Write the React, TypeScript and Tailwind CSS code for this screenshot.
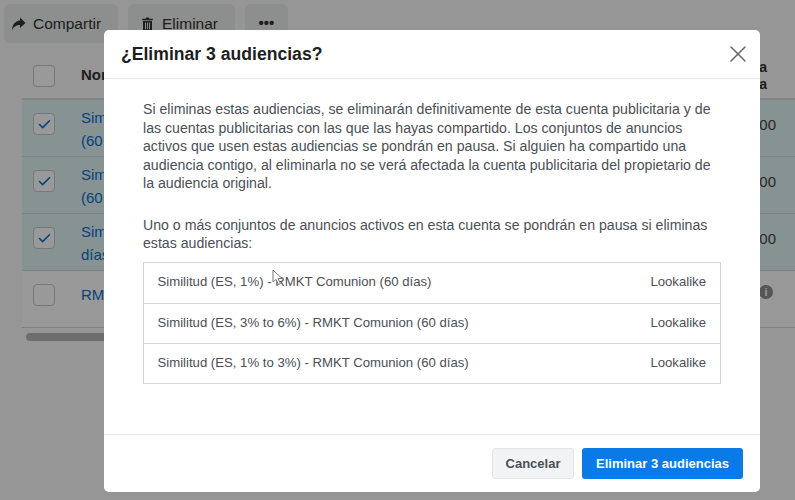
import { X, Check } from "lucide-react";

const rows = [
  { top: "Sim", bottom: "(60", checked: true },
  { top: "Sim", bottom: "(60", checked: true },
  { top: "Sim", bottom: "días", checked: true },
  { top: "RM", bottom: "", checked: false },
];

const audiences = [
  "Similitud (ES, 1%) - RMKT Comunion (60 días)",
  "Similitud (ES, 3% to 6%) - RMKT Comunion (60 días)",
  "Similitud (ES, 1% to 3%) - RMKT Comunion (60 días)",
];

function Box({ checked }: { checked: boolean }) {
  return (
    <div className="w-[22px] h-[22px] shrink-0 rounded-[4px] border border-[#c4c6c8] bg-white flex items-center justify-center">
      {checked && <Check className="w-[15px] h-[15px] text-[#0a6fd0]" strokeWidth={2.5} />}
    </div>
  );
}

export default function App() {
  return (
    <div className="relative w-[795px] h-[500px] overflow-hidden bg-[#fafafa] font-['Liberation_Sans',Arial,sans-serif]">
      {/* page behind the dialog */}
      <div className="flex gap-[10px] pl-[4px] pt-[4px]">
        <div className="w-[114px] h-[39px] rounded-[6px] bg-[#eceded] flex items-center pl-[7px] gap-[7px] text-[15.5px] text-[#333]">
          <svg width="15" height="14" viewBox="0 0 15 14">
            <path d="M9 0.5 L14.5 6 L9 11 L9 8 C5.5 8 2.8 9.5 1 13 C1.3 8 4 4 9 3.5 Z" fill="#333" />
          </svg>
          <span className="mt-[1px]">Compartir</span>
        </div>
        <div className="w-[107px] h-[39px] rounded-[6px] bg-[#eceded] flex items-center pl-[14px] gap-[9px] text-[15.5px] text-[#333]">
          <svg width="11" height="14" viewBox="0 0 11 14">
            <path d="M4 0.5 H7 V1.7 H10.8 V3.2 H0.2 V1.7 H4 Z" fill="#333" />
            <path
              d="M1 4 H10 V13 Q10 13.8 9.2 13.8 H1.8 Q1 13.8 1 13 Z M3 5.5 V12.3 H4 V5.5 Z M5 5.5 V12.3 H6 V5.5 Z M7 5.5 V12.3 H8 V5.5 Z"
              fill="#333"
              fillRule="evenodd"
            />
          </svg>
          <span className="mt-[1px]">Eliminar</span>
        </div>
        <div className="w-[43px] h-[39px] rounded-[6px] bg-[#eceded] flex items-center justify-center text-[15px] font-bold text-[#333]">
          •••
        </div>
      </div>
      <div className="ml-[22px] mt-[10px]">
        <div className="h-[47px] flex items-center pl-[11px] gap-[26px] border-b-2 border-[#dcdcdc]">
          <Box checked={false} />
          <span className="text-[15px] font-bold text-[#333]">Nombre</span>
          <div className="ml-auto mr-[28px] text-[14px] font-bold leading-[17px] text-[#333]">
            a<br />a
          </div>
        </div>
        {rows.map((row, i) => (
          <div
            key={i}
            className={`h-[57px] flex items-start pl-[11px] gap-[26px] border-b border-[#d8d8d8] ${row.checked ? "bg-[#e2f3f5]" : "bg-white"}`}
          >
            <div className="pt-[13px]">
              <Box checked={row.checked} />
            </div>
            <div className={`text-[15px] leading-[22.5px] text-[#0a6fd0] ${row.bottom ? "pt-[7px]" : "pt-[13px]"}`}>
              {row.top}
              {row.bottom && <br />}
              {row.bottom}
            </div>
            <div className="ml-auto mr-[19px] pt-[14px] text-[15px] text-[#444]">
              {row.checked ? (
                "00"
              ) : (
                <div className="w-[14px] h-[14px] mr-[3px] rounded-full bg-[#909090] flex items-center justify-center text-[11px] font-bold text-white">
                  i
                </div>
              )}
            </div>
          </div>
        ))}
        <div className="mt-[5px] ml-[4px] w-[400px] h-[8px] rounded-full bg-[#b8b8b8]" />
      </div>

      {/* overlay */}
      <div className="absolute inset-0 bg-black/40" />

      {/* dialog */}
      <div className="absolute left-[104px] top-[30px] w-[656px] h-[462px] bg-white rounded-[5px] flex flex-col">
        <div className="h-[49px] shrink-0 border-b border-[#e6e6e6] flex items-center justify-between pl-[17px] pr-[8px]">
          <h2 className="text-[17.6px] font-bold text-[#1c1e21]">¿Eliminar 3 audiencias?</h2>
          <X className="w-[28px] h-[28px] text-[#666]" strokeWidth={1.25} />
        </div>
        <div className="flex-1 pt-[21px] pl-[39px] pr-[39px] text-[14.15px] leading-[18.5px] text-[#4b4f56]">
          <p>
            Si eliminas estas audiencias, se eliminarán definitivamente de esta cuenta publicitaria y de las cuentas
            publicitarias con las que las hayas compartido. Los conjuntos de anuncios activos que usen estas audiencias
            se pondrán en pausa. Si alguien ha compartido una audiencia contigo, al eliminarla no se verá afectada la
            cuenta publicitaria del propietario de la audiencia original.
          </p>
          <p className="mt-[23px]">
            Uno o más conjuntos de anuncios activos en esta cuenta se pondrán en pausa si eliminas estas audiencias:
          </p>
          <div className="mt-[9px] border border-[#d4d4d4] text-[13.17px]">
            {audiences.map((name, i) => (
              <div
                key={name}
                className={`h-[40.3px] flex items-center justify-between pl-[13.5px] pr-[14px] ${i > 0 ? "border-t border-[#d9d9d9]" : ""}`}
              >
                <span>{name}</span>
                <span>Lookalike</span>
              </div>
            ))}
          </div>
        </div>
        <div className="h-[58px] shrink-0 border-t border-[#e6e6e6] flex items-center justify-end gap-[8px] pr-[17px]">
          <button className="w-[82px] h-[31px] rounded-[3px] bg-[#f2f3f4] border border-[#e4e5e6] text-[13px] font-bold text-[#4b4f56]">
            Cancelar
          </button>
          <button className="w-[161px] h-[31px] rounded-[3px] bg-[#0a7ae6] text-[13px] font-bold text-white">
            Eliminar 3 audiencias
          </button>
        </div>
      </div>

      {/* mouse cursor caught in the screenshot */}
      <svg className="absolute left-[272px] top-[269px]" width="12" height="18" viewBox="0 0 12 18">
        <path d="M1 1 L1 13 L4 10.5 L6.5 15.5 L8.5 14.5 L6 9.5 L10 9.5 Z" fill="#fff" stroke="#777" strokeWidth="1" />
      </svg>
    </div>
  );
}
